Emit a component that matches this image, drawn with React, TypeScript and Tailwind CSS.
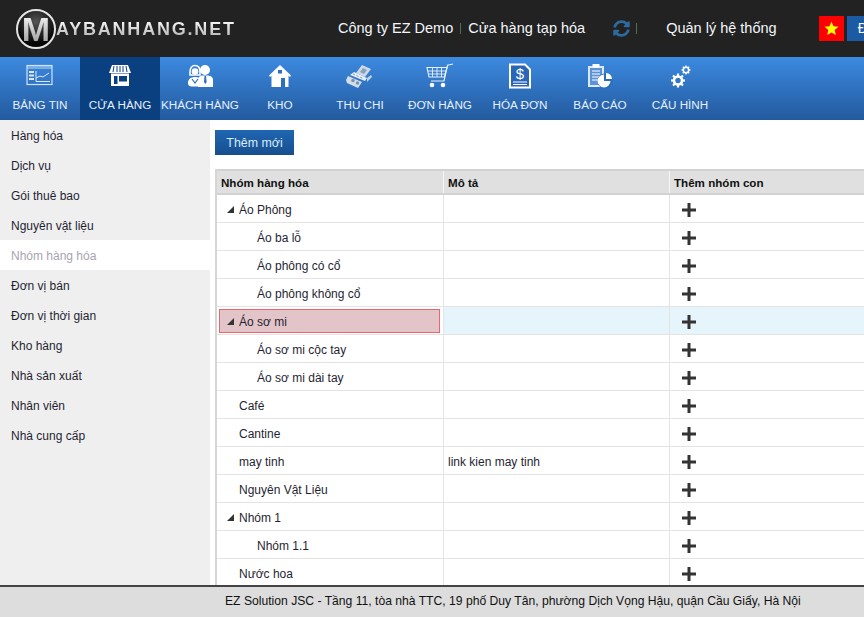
import React from "react";
import { FaSyncAlt } from "react-icons/fa";

const I = ({ children, w = 34, h = 30 }: { children: React.ReactNode; w?: number; h?: number }) => (
  <svg width={w} height={h} viewBox={`0 0 ${w} ${h}`} fill="none">{children}</svg>
);

const IconBoard = () => (
  <I w={28} h={24}>
    <rect x="1" y="1.5" width="25" height="19" stroke="#cfe2f8" strokeWidth="1.2" />
    <rect x="1" y="1.5" width="25" height="3.5" fill="#cfe2f8" fillOpacity=".45" />
    <rect x="3" y="7" width="5" height="2" fill="#dbe9fa" />
    <rect x="3" y="10.5" width="5" height="2" fill="#dbe9fa" />
    <rect x="3" y="14" width="5" height="2" fill="#dbe9fa" />
    <path d="M10 14l4-2 3 1 6-4M10 17.5h14M10 7v10.5" stroke="#dbe9fa" strokeWidth="1" />
  </I>
);
const IconStore = () => (
  <I w={24} h={24}>
    <path d="M4 1h16l3 8H1z" fill="#fff" />
    <path d="M6 2L5 8M9 2v6M12 2v6M15 2v6M18 2l1 6" stroke="#0a3f80" strokeWidth="1" />
    <path d="M3 9.5h18V22H3z" fill="#fff" />
    <rect x="6" y="12" width="3.5" height="8" fill="#0a3f80" />
    <rect x="11" y="12" width="8" height="5.5" fill="#0a3f80" />
  </I>
);
const IconPeople = () => (
  <I w={28} h={24}>
    <circle cx="19" cy="6" r="5" fill="#fff" />
    <path d="M12 23v-7c0-3 2-4 4-4.500h6c3 .5 5 1.500 5 4.500v7z" fill="#fff" />
    <path d="M18.500 12h1.500l.7 6-1.400 2-1.300-2z" fill="#2f6fc0" />
    <path d="M4 8c0-4 2-6.500 5-6.500s5 2.500 5 6.500v3H4z" stroke="#fff" strokeWidth="1.600" />
    <circle cx="9" cy="7.500" r="3.300" fill="#fff" />
    <path d="M2 19c0-4 3-6 7-6s6 2 6 6-3 3.500-7 3.500S2 22 2 19z" fill="#fff" />
    <path d="M6 15l3 4 3-4" stroke="#2f6fc0" strokeWidth="1.200" />
  </I>
);
const IconHouse = () => (
  <I w={24} h={24}>
    <path d="M12 1L1 11.500l1 1.500 1.500-1.300V23h17V11.700L22 13l1-1.500z" fill="#fff" />
    <rect x="10" y="6" width="4" height="3.500" fill="#2f6fc0" />
    <rect x="13" y="14" width="4" height="9" fill="#2f6fc0" />
  </I>
);
const IconMoney = () => (
  <I w={30} h={26}>
    <path d="M17 2l9 4-6 8-9-4z" fill="#cdd9e8" />
    <path d="M18 5l4 2-3 4-4-2z" fill="#8aa0ba" />
    <path d="M9 9l13 6-2 3L5 12z" fill="#e6edf5" />
    <path d="M3 13l14 6-4 6-11-5-1-3z" fill="#d5dfeb" />
    <circle cx="8" cy="17.500" r="1.800" fill="#7e93ad" />
    <circle cx="12.500" cy="20" r="1.800" fill="#7e93ad" />
    <path d="M22 15l4-3 1 2-5 5z" fill="#c2d0e0" />
    <path d="M8 11l11 5" stroke="#7e93ad" strokeDasharray="2 2" />
  </I>
);
const IconCart = () => (
  <I w={28} h={26}>
    <path d="M27 1l-5.500 1.200L18 18H5" stroke="#e8f1fb" strokeWidth="1.200" />
    <path d="M1 4.500h20l-2.600 9.500H3z" stroke="#e8f1fb" strokeWidth="1.100" />
    <path d="M1.800 8h18M2.500 11h16.500M6.500 4.500v9.500M11 4.500v9.500M15.500 4.500v9.500" stroke="#e8f1fb" strokeWidth=".9" />
    <circle cx="6" cy="22" r="2.300" fill="#fff" />
    <circle cx="17" cy="22" r="2.300" fill="#fff" />
  </I>
);
const IconInvoice = () => (
  <I w={24} h={26}>
    <path d="M2 1.500h15l5 5v18H2z" stroke="#fff" strokeWidth="2" fill="#2a66b4" />
    <text x="12" y="16" textAnchor="middle" fontSize="15" fontFamily="Liberation Sans" fill="#fff">$</text>
    <path d="M5 19h14M5 21.500h14" stroke="#fff" strokeWidth="1" />
  </I>
);
const IconReport = () => (
  <I w={28} h={26}>
    <path d="M2 3h16v21H2z" fill="#dbe8f8" />
    <path d="M4 5h12v17H4z" fill="#5c93d6" />
    <rect x="6.500" y="1" width="7" height="3.500" fill="#fff" />
    <path d="M6 8h8M6 11h8M6 14h8M6 17h6" stroke="#fff" strokeWidth="1" />
    <circle cx="19" cy="18" r="7.500" fill="#2a6cc0" />
    <path d="M18 11.500a6.500 6.500 0 1 0 6.500 6.500H18z" fill="#fff" />
    <path d="M20 10a6 6 0 0 1 6 6h-6z" fill="#fff" />
  </I>
);
const Gear = ({ cx, cy, r, sw, tr, tw }: { cx: number; cy: number; r: number; sw: number; tr: number; tw: number }) => (
  <g stroke="#fff">
    <circle cx={cx} cy={cy} r={r} strokeWidth={sw} />
    {[0, 45, 90, 135, 180, 225, 270, 315].map((a) => (
      <path key={a} d={`M${cx} ${cy - r}V${cy - tr}`} strokeWidth={tw} transform={`rotate(${a} ${cx} ${cy})`} />
    ))}
  </g>
);
const IconGears = () => (
  <I w={24} h={24}>
    <Gear cx={10} cy={16.500} r={4} sw={2.600} tr={7} tw={2.200} />
    <Gear cx={18} cy={6} r={2.700} sw={1.500} tr={4.500} tw={1.400} />
  </I>
);

const nav: [string, React.ReactNode][] = [
  ["BẢNG TIN", <IconBoard />],
  ["CỬA HÀNG", <IconStore />],
  ["KHÁCH HÀNG", <IconPeople />],
  ["KHO", <IconHouse />],
  ["THU CHI", <IconMoney />],
  ["ĐƠN HÀNG", <IconCart />],
  ["HÓA ĐƠN", <IconInvoice />],
  ["BÁO CÁO", <IconReport />],
  ["CẤU HÌNH", <IconGears />],
];

const side = ["Hàng hóa", "Dịch vụ", "Gói thuê bao", "Nguyên vật liệu", "Nhóm hàng hóa", "Đơn vị bán", "Đơn vị thời gian", "Kho hàng", "Nhà sản xuất", "Nhân viên", "Nhà cung cấp"];

type Row = { name: string; level: 0 | 1; arrow?: boolean; desc?: string; sel?: boolean };
const rows: Row[] = [
  { name: "Áo Phông", level: 0, arrow: true },
  { name: "Áo ba lỗ", level: 1 },
  { name: "Áo phông có cổ", level: 1 },
  { name: "Áo phông không cổ", level: 1 },
  { name: "Áo sơ mi", level: 0, arrow: true, sel: true },
  { name: "Áo sơ mi cộc tay", level: 1 },
  { name: "Áo sơ mi dài tay", level: 1 },
  { name: "Café", level: 0 },
  { name: "Cantine", level: 0 },
  { name: "may tinh", level: 0, desc: "link kien may tinh" },
  { name: "Nguyên Vật Liệu", level: 0 },
  { name: "Nhóm 1", level: 0, arrow: true },
  { name: "Nhóm 1.1", level: 1 },
  { name: "Nước hoa", level: 0 },
];

const Arrow = () => (
  <svg width="7" height="7" viewBox="0 0 7 7" className="shrink-0"><path d="M7 0v7H0z" fill="#333" /></svg>
);
const Plus = () => (
  <svg width="14" height="14" viewBox="0 0 14 14"><path d="M5.500 0h3v5.500H14v3H8.500V14h-3V8.500H0v-3h5.500z" fill="#333" /></svg>
);

function NameCell({ r }: { r: Row }) {
  const inner = (
    <>
      <span className="w-[8px] flex justify-center">{r.arrow && <Arrow />}</span>
      <span className={r.level === 1 ? "ml-[23px]" : "ml-[5px]"}>{r.name}</span>
    </>
  );
  if (r.sel) {
    return (
      <div className="w-[226px] h-full pl-[2px] pt-[2px] pr-[3px] bg-white">
        <div className="h-[24px] w-full flex items-center pl-[6px] pt-[1px] bg-[#e3c4c8] border border-[#e8666d]">{inner}</div>
      </div>
    );
  }
  return <div className="w-[226px] h-full flex items-center pl-[9px] pt-[2px]">{inner}</div>;
}

export default function App() {
  return (
    <div className="w-[864px] h-[617px] flex flex-col overflow-hidden bg-white text-[12px] text-[#1f1f33] font-['Liberation_Sans',Arial,sans-serif]">
      <header className="h-[57px] shrink-0 bg-[#222222] flex items-center text-white whitespace-nowrap">
        <div className="ml-[16px] flex items-center w-[322px] shrink-0">
          <div className="relative w-[40px] h-[40px] rounded-full border-2 border-[#e4e4e4] bg-[radial-gradient(circle_at_50%_30%,#555,#050505_70%)] flex items-center justify-center shrink-0">
            <span className="font-bold text-[34px] leading-none bg-gradient-to-b from-white to-[#999] bg-clip-text text-transparent">M</span>
          </div>
          <span className="font-bold text-[18px] tracking-[1.8px] leading-none bg-gradient-to-b from-white to-[#b0b0b0] bg-clip-text text-transparent">AYBANHANG.NET</span>
        </div>
        <span className="text-[14.5px] text-[#f2f6fb] shrink-0">Công ty EZ Demo</span>
        <span className="mx-[7px] w-px h-[11px] bg-[#4f6f4f] shrink-0" />
        <span className="text-[14.5px] text-[#f2f6fb] shrink-0">Cửa hàng tạp hóa</span>
        <FaSyncAlt className="ml-[28px] text-[#2f6a9f] text-[17px] shrink-0" />
        <span className="ml-[6px] w-px h-[11px] bg-[#4f6f4f] shrink-0" />
        <span className="ml-[29px] text-[14.5px] text-[#f2f6fb] shrink-0">Quản lý hệ thống</span>
        <div className="ml-[42px] w-[25px] h-[25px] bg-[#ff0000] flex items-center justify-center shrink-0">
          <svg width="15" height="15" viewBox="0 0 24 24"><path d="M12 1l3.200 7.400 8 .7-6.100 5.300 1.800 7.900L12 18.200l-6.900 4.100 1.800-7.900L.8 9.100l8-.7z" fill="#ffff00" /></svg>
        </div>
        <div className="ml-[3px] w-[80px] h-[25px] bg-[#1c5ba3] flex items-center pl-[11px] shrink-0 text-[14px]">Đăng xuất</div>
      </header>

      <nav className="h-[63px] shrink-0 flex bg-gradient-to-b from-[#3c8ae0] to-[#235a9e] text-[11.7px] text-[#e6f0fb]">
        {nav.map(([label, icon], i) => (
          <div key={label} className={`w-[80px] h-full flex flex-col items-center ${i === 1 ? "bg-[#0a3f80]" : ""}`}>
            <div className="h-[38px] flex items-center justify-center">{icon}</div>
            <span className="mt-[2px] whitespace-nowrap leading-[15px]">{label}</span>
          </div>
        ))}
      </nav>

      <main className="flex-1 min-h-0 flex overflow-hidden">
        <aside className="w-[210px] shrink-0 bg-[#efefef]">
          {side.map((s) => (
            <div key={s} className={`h-[30px] pl-[11px] pt-[2px] flex items-center ${s === "Nhóm hàng hóa" ? "bg-white text-[#a9a4b0]" : ""}`}>{s}</div>
          ))}
        </aside>
        <section className="flex-1 min-w-0 pl-[5px] pt-[10px]">
          <button className="block w-[79px] h-[25px] pt-[1px] bg-gradient-to-b from-[#1f66b2] to-[#174f8e] text-[#dcebfa] text-[12.4px]">Thêm mới</button>
          <div className="mt-[14px] border-l-2 border-[#d6d6d6]">
            <div className="flex h-[26px] bg-[#e0e0e0] border-t-2 border-b-2 border-[#d2d2d2] font-bold text-[11.6px] text-[#111]">
              <div className="w-[226px] flex items-center pl-[4px] pt-[2px]">Nhóm hàng hóa</div>
              <div className="w-[226px] flex items-center pl-[4px] pt-[2px] border-l border-white/70">Mô tả</div>
              <div className="flex-1 flex items-center pl-[4px] pt-[2px] border-l border-white/70">Thêm nhóm con</div>
            </div>
            {rows.map((r) => (
              <div key={r.name} className={`flex h-[28px] border-b border-[#e4e4e4] ${r.sel ? "bg-[#e6f5fc]" : ""}`}>
                <NameCell r={r} />
                <div className="w-[226px] flex items-center pl-[4px] pt-[2px] border-l border-[#e4e4e4]">{r.desc}</div>
                <div className="flex-1 flex items-center pl-[12px] pt-[2px] border-l border-[#e4e4e4]"><Plus /></div>
              </div>
            ))}
          </div>
        </section>
      </main>

      <footer className="h-[32px] shrink-0 bg-[#dddddd] border-t-2 border-[#444444] flex items-center pl-[225px] pb-[2px] text-[12.15px] text-[#111] whitespace-nowrap">
        EZ Solution JSC - Tầng 11, tòa nhà TTC, 19 phố Duy Tân, phường Dịch Vọng Hậu, quận Cầu Giấy, Hà Nội
      </footer>
    </div>
  );
}
